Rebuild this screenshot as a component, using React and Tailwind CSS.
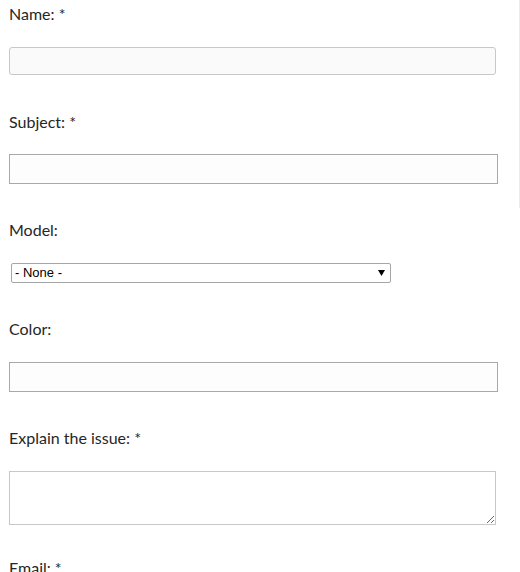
import React from "react";

const labelCls =
  "block text-[16px] leading-[22px] text-[#262626] font-['Lato',sans-serif]";

export default function App() {
  return (
    <div className="flex w-[520px] bg-white">
      <div className="w-[519px] px-[9px] pt-[3px]">
        <label className={labelCls}>Name: *</label>
        <input
          className="mt-[22px] block h-[28px] w-[487px] rounded-[3px] border border-[#c8c8c8] bg-[#fafafa] outline-none"
          type="text"
        />
        <label className={`${labelCls} mt-[36px]`}>Subject: *</label>
        <input
          className="mt-[21px] block h-[30px] w-[489px] border border-[#a9a9a9] bg-[#fdfdfd] outline-none"
          type="text"
        />
        <label className={`${labelCls} mt-[35px]`}>Model:</label>
        <div className="ml-[2px] mt-[22px] flex h-[20px] w-[380px] items-center justify-between rounded-[2px] border border-[#a6a6a6] bg-white pl-[3px] pr-[5px] font-['Liberation_Sans',sans-serif] text-[13px] text-black">
          <span>- None -</span>
          <svg width="7" height="6" viewBox="0 0 7 6">
            <path d="M0 0H7L3.5 6Z" fill="#000" />
          </svg>
        </div>
        <label className={`${labelCls} mt-[35px]`}>Color:</label>
        <input
          className="mt-[22px] block h-[30px] w-[489px] border border-[#a9a9a9] bg-[#fdfdfd] outline-none"
          type="text"
        />
        <label className={`${labelCls} mt-[35px]`}>Explain the issue: *</label>
        <textarea
          className="mt-[22px] block h-[54px] w-[487px] border border-[#c8c8c8] bg-white outline-none"
        />
        <label className={`${labelCls} mt-[32px]`}>Email: *</label>
      </div>
      <div className="h-[208px] w-px bg-[#ebebeb]" />
    </div>
  );
}
